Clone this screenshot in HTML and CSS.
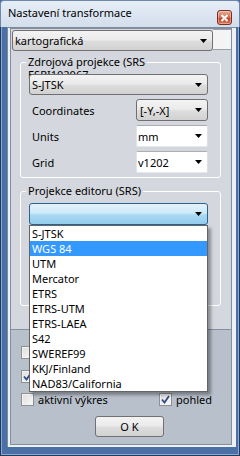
FILE: index.html
```html
<!DOCTYPE html>
<html lang="cs">
<head>
  <meta charset="UTF-8" />
  <meta name="viewport" content="width=device-width, initial-scale=1.0"/>
  <title>Nastavení transformace</title>
  <link rel="stylesheet" href="styles.css">
</head>
<body>
  <div class="window">
    <div class="titlebar">
      <span class="title">Nastavení transformace</span>
      <span class="close-btn">
        <svg width="9" height="8" viewBox="0 0 9 8"><path d="M1.5 1l6 6M7.5 1l-6 6" stroke="#fff" stroke-width="2"/></svg>
      </span>
    </div>
    <div class="frame">
      <div class="client">
        <div class="panel-top">
          <div class="type-row">
            <div class="combo combo-gray combo-type">
              <span>kartografická</span>
              <svg class="arrow" width="7" height="4" viewBox="0 0 7 4"><path d="M0 0h7L3.5 4z"/></svg>
            </div>
            <div class="type-stub"></div>
          </div>

          <div class="group group-source">
            <span class="group-title">Zdrojová projekce (SRS<br>ESRI102067</span>
            <div class="combo combo-gray combo-wide">
              <span>S-JTSK</span>
              <svg class="arrow" width="7" height="4" viewBox="0 0 7 4"><path d="M0 0h7L3.5 4z"/></svg>
            </div>
            <div class="field-row">
              <span class="field-label">Coordinates</span>
              <div class="combo combo-gray combo-small">
                <span>[-Y,-X]</span>
                <svg class="arrow" width="7" height="4" viewBox="0 0 7 4"><path d="M0 0h7L3.5 4z"/></svg>
              </div>
            </div>
            <div class="field-row">
              <span class="field-label">Units</span>
              <div class="combo combo-white combo-small">
                <span>mm</span>
                <svg class="arrow" width="7" height="4" viewBox="0 0 7 4"><path d="M0 0h7L3.5 4z"/></svg>
              </div>
            </div>
            <div class="field-row">
              <span class="field-label">Grid</span>
              <div class="combo combo-white combo-small">
                <span>v1202</span>
                <svg class="arrow" width="7" height="4" viewBox="0 0 7 4"><path d="M0 0h7L3.5 4z"/></svg>
              </div>
            </div>
          </div>

          <div class="group group-editor">
            <span class="group-title">Projekce editoru (SRS)</span>
            <div class="combo combo-open">
              <span></span>
              <svg class="arrow" width="7" height="4" viewBox="0 0 7 4"><path d="M0 0h7L3.5 4z"/></svg>
              <ul class="dropdown">
                <li>S-JTSK</li>
                <li class="selected">WGS 84</li>
                <li>UTM</li>
                <li>Mercator</li>
                <li>ETRS</li>
                <li>ETRS-UTM</li>
                <li>ETRS-LAEA</li>
                <li>S42</li>
                <li>SWEREF99</li>
                <li>KKJ/Finland</li>
                <li>NAD83/California</li>
              </ul>
            </div>
          </div>
        </div>

        <div class="panel-bottom">
          <div class="check-row row-1">
            <span class="box"></span>
          </div>
          <div class="check-row row-2">
            <span class="box"><svg width="11" height="11" viewBox="0 0 11 11"><path d="M2 5.5l2.5 3L9 2" fill="none" stroke="#2f4a86" stroke-width="1.8"/></svg></span>
          </div>
          <div class="check-row row-3">
            <label class="check check-wide"><span class="box"></span><span>aktivní výkres</span></label>
            <label class="check"><span class="box"><svg width="11" height="11" viewBox="0 0 11 11"><path d="M2 5.5l2.5 3L9 2" fill="none" stroke="#2f4a86" stroke-width="1.8"/></svg></span><span>pohled</span></label>
          </div>
          <button class="ok-btn" type="button">O K</button>
        </div>
      </div>
    </div>
  </div>
</body>
</html>
```

FILE: styles.css
```css
body {
  margin: 0;
  font-family: 'Noto Sans', 'Open Sans', sans-serif;
  font-size: 11px;
  color: #000;
  background-color: #4b70a6;
}
.window {
  width: 240px;
  height: 456px;
  display: flex;
  flex-direction: column;
}
.titlebar {
  flex: none;
  height: 27px;
  box-sizing: border-box;
  display: flex;
  align-items: flex-start;
  padding: 0 7px 0 7px;
  background: linear-gradient(#e6eef7, #d3deec);
  border: 1px solid #6f87a8;
  border-bottom: none;
  border-radius: 4px 4px 0 0;
}
.title {
  margin-top: 5px;
  line-height: 14px;
}
.close-btn {
  margin-left: auto;
  margin-top: 9px;
  width: 15px;
  height: 15px;
  box-sizing: border-box;
  display: flex;
  align-items: center;
  justify-content: center;
  border: 1px solid #7c2d1f;
  border-radius: 3px;
  background: linear-gradient(#e9ad97, #d46a4d 50%, #c4401f 55%, #d8765a);
  box-shadow: inset 0 0 0 1px rgba(255, 255, 255, 0.35);
}
.frame {
  flex: 1;
  display: flex;
  padding: 0 4px 9px 7px;
  background-color: #4b70a6;
  box-shadow: inset 1px 0 #22395c, inset -1px 0 #22395c, inset 0 -1px #22395c, inset 2px 0 #89a8d4, inset -2px 0 #89a8d4, inset 0 -2px #89a8d4;
}
.client {
  flex: 1;
  display: flex;
  flex-direction: column;
  padding: 0 4px 2px 2px;
  border-left: 1px solid #7f8c9d;
  border-top: 1px solid #7f8c9d;
  background: #edf1f6;
}
.panel-top {
  flex: none;
  height: 302px;
  box-sizing: border-box;
  border: 1px solid #838f9f;
  background: #d4d8de;
}
.panel-bottom {
  flex: 1;
  padding: 16px 0 0 10px;
  border: 1px solid #838f9f;
  border-top: none;
  background: #b8c0cc;
}
.type-row {
  display: flex;
  margin-top: 1px;
}
.type-stub {
  flex: 1;
  height: 21px;
  margin-top: -1px;
  box-sizing: border-box;
  border-top: 1px solid #9aa1aa;
  border-bottom: 1px solid #9aa1aa;
  background: #f4f4f4;
}
.combo {
  position: relative;
  z-index: 1;
  display: flex;
  align-items: center;
  justify-content: space-between;
  box-sizing: border-box;
  height: 22px;
  padding: 0 5px 0 2px;
  border: 1px solid #707070;
  border-radius: 3px;
}
.combo-gray {
  background: linear-gradient(#f3f3f3, #ebebeb 45%, #dddddd 55%, #d1d1d1);
}
.combo-type {
  margin-left: 1px;
  width: 201px;
  height: 21px;
}
.combo-wide {
  height: 21px;
}
.combo-small {
  width: 72px;
  padding-left: 3px;
}
.combo-white {
  background: #fff;
  border-color: #abadb3 #dbdfe6 #e3e9ef #e2e3ea;
  border-radius: 2px;
  padding-left: 1px;
}
.combo-open {
  background: linear-gradient(#e4f3fc, #cde9f8 45%, #aad9f3 55%, #92cbec);
  border-color: #2c628b;
}
.arrow {
  flex: none;
}
.group {
  position: relative;
  box-sizing: border-box;
  width: 201px;
  margin-left: 9px;
  border: 1px solid #fff;
  border-radius: 3px;
}
.group-source {
  margin-top: 11px;
  padding: 11px 12px 4px 8px;
}
.group-editor {
  margin-top: 13px;
  height: 115px;
  padding: 11px 12px 0 8px;
}
.group-title {
  position: absolute;
  top: -8px;
  left: 5px;
  padding: 0 2px;
  line-height: 13px;
  white-space: nowrap;
  background: #d4d8de;
}
.field-row {
  display: flex;
  align-items: center;
  justify-content: space-between;
  margin-top: 4px;
}
.field-label {
  padding-left: 3px;
}
.dropdown {
  position: absolute;
  top: calc(100% + 1px);
  left: -1px;
  width: 179px;
  box-sizing: border-box;
  margin: 0;
  padding: 0;
  list-style: none;
  background: #fff;
  border: 1px solid #646464;
  box-shadow: 3px 3px 3px rgba(0, 0, 0, 0.35);
}
.dropdown li {
  height: 15px;
  line-height: 15px;
  padding-left: 2px;
}
.dropdown .selected {
  background: #3399ff;
  color: #fff;
}
.check-row {
  display: flex;
  align-items: center;
  height: 13px;
}
.row-1 {
  margin-bottom: 11px;
}
.row-2 {
  margin-bottom: 10px;
}
.check {
  display: flex;
  align-items: center;
  gap: 4px;
  line-height: 13px;
}
.check-wide {
  width: 138px;
}
.box {
  display: flex;
  align-items: center;
  justify-content: center;
  width: 13px;
  height: 13px;
  box-sizing: border-box;
  border: 1px solid #8e8f8f;
  background: linear-gradient(135deg, #dcdcdc, #fbfbfb);
  box-shadow: inset 0 0 0 1px #f3f3f3;
}
.ok-btn {
  display: block;
  margin: 10px 0 0 74px;
  width: 69px;
  height: 21px;
  padding: 0;
  font: inherit;
  color: #000;
  border: 1px solid #707070;
  border-radius: 3px;
  background: linear-gradient(#f3f3f3, #ebebeb 45%, #dddddd 55%, #d1d1d1);
}
```
